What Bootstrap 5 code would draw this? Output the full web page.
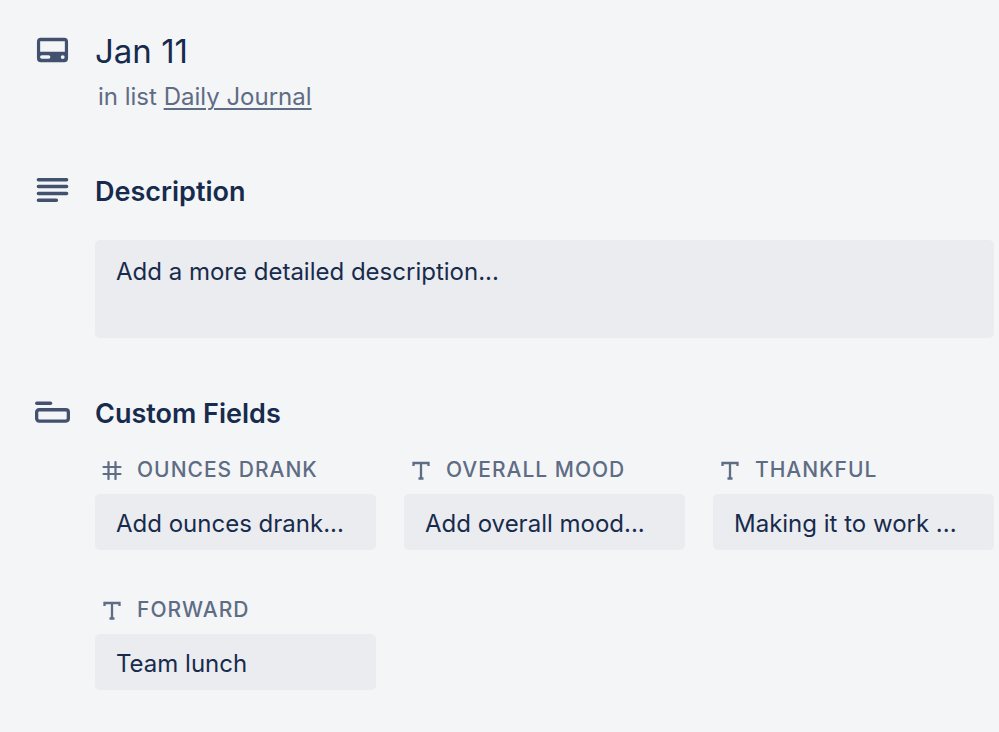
<!DOCTYPE html>
<html lang="en">
<head>
<meta charset="utf-8">
<meta name="viewport" content="width=device-width, initial-scale=1">
<title>Jan 11</title>
<link href="https://cdn.jsdelivr.net/npm/bootstrap@5.3.0/dist/css/bootstrap.min.css" rel="stylesheet">
<style>
  body { background: #f4f5f7; color: #172b4d; font-family: Inter, "Liberation Sans", sans-serif; font-size: 24px; line-height: 32px; }
  .card-detail { padding: 28px 5px 40px 35px; }
  .detail-section { display: grid; grid-template-columns: 35px minmax(0, 1fr); column-gap: 25px; }
  .section-icon { color: #42526e; height: 44px; }
  .detail-title { font-size: 33px; line-height: 46px; font-weight: 400; }
  .section-title { font-size: 27px; line-height: 48px; font-weight: 600; }
  .list-note { color: #5e6c84; padding-left: 3px; line-height: 46px; }
  .list-note a { color: inherit; text-decoration-thickness: 2px; text-underline-offset: 3px; }
  .field-box, .field-box:focus { background: #ebecf0; color: #172b4d; border: 0; border-radius: 5px; font-size: 24px; line-height: 32px; padding: 14px 21px 10px; }
  .field-box::placeholder { color: #172b4d; opacity: 1; }
  .description-box, .description-box:focus { padding-top: 16px; height: 98px; resize: none; }
  .after-title { margin-top: 48px; }
  .after-description { margin-top: 52px; }
  .fields { --bs-gutter-x: 28px; row-gap: 44px; }
  .field-label { color: #5e6c84; font-size: 21px; line-height: 32px; font-weight: 500; letter-spacing: 1px; gap: 15px; padding-left: 7px; margin-bottom: 8px; text-transform: uppercase; }
</style>
<script src="https://cdn.jsdelivr.net/npm/bootstrap@5.3.0/dist/js/bootstrap.bundle.min.js" defer></script>
</head>
<body>
<svg class="d-none" aria-hidden="true">
  <symbol id="type-text" viewBox="0 0 20 20">
    <path d="M2.500 6V3H17.500V6M10 3V19M7.500 18.500H12.500" fill="none" stroke="currentColor" stroke-width="2.300"/>
  </symbol>
  <symbol id="type-number" viewBox="0 0 20 20">
    <path d="M6.500 2V19M13.500 2V19M1.500 7H18.500M1.500 14H18.500" fill="none" stroke="currentColor" stroke-width="2.200" stroke-linecap="round"/>
  </symbol>
</svg>
<main class="card-detail">
  <header class="detail-section">
    <div class="section-icon d-flex align-items-center justify-content-center">
      <svg width="35" height="28" viewBox="0 0 36 28" aria-hidden="true"><path fill="currentColor" fill-rule="evenodd" d="M6 1.500H30A4 4 0 0 1 34 5.500V22.500A4 4 0 0 1 30 26.500H6A4 4 0 0 1 2 22.500V5.500A4 4 0 0 1 6 1.500ZM5.300 5V15.800H30.700V5ZM7 19.500A1.800 1.800 0 0 0 7 23.100H14A1.800 1.800 0 0 0 14 19.500ZM28.500 19.300A2 2 0 1 0 28.500 23.300A2 2 0 1 0 28.500 19.300Z"/></svg>
    </div>
    <div>
      <h1 class="detail-title m-0">Jan 11</h1>
      <p class="list-note m-0">in list <a href="#">Daily Journal</a></p>
    </div>
  </header>

  <section class="detail-section after-title">
    <div class="section-icon d-flex align-items-center justify-content-center">
      <svg width="35" height="28" viewBox="0 0 36 28" aria-hidden="true"><path d="M3.500 3.500H32.500M3.500 10.500H32.500M3.500 17.500H32.500M3.500 24.500H22" stroke="currentColor" stroke-width="3.600" stroke-linecap="round"/></svg>
    </div>
    <div>
      <h2 class="section-title mb-4"><label for="description">Description</label></h2>
      <textarea class="form-control field-box description-box" id="description" placeholder="Add a more detailed description..."></textarea>
    </div>
  </section>

  <section class="detail-section after-description">
    <div class="section-icon d-flex align-items-center justify-content-center">
      <svg width="35" height="24" viewBox="0 0 36 24" aria-hidden="true"><path d="M1.800 3H16" stroke="currentColor" stroke-width="3.400" stroke-linecap="round"/><rect x="1.700" y="9.700" width="32.600" height="11.600" rx="2.500" fill="none" stroke="currentColor" stroke-width="3.400"/></svg>
    </div>
    <div>
      <h2 class="section-title mb-3">Custom Fields</h2>
      <div class="row row-cols-3 fields">
        <div class="col">
          <label class="field-label d-flex align-items-center" for="ounces"><svg width="20" height="20" aria-hidden="true"><use href="#type-number"/></svg>Ounces drank</label>
          <input class="form-control field-box" id="ounces" type="text" placeholder="Add ounces drank...">
        </div>
        <div class="col">
          <label class="field-label d-flex align-items-center" for="mood"><svg width="20" height="20" aria-hidden="true"><use href="#type-text"/></svg>Overall mood</label>
          <input class="form-control field-box" id="mood" type="text" placeholder="Add overall mood...">
        </div>
        <div class="col">
          <label class="field-label d-flex align-items-center" for="thankful"><svg width="20" height="20" aria-hidden="true"><use href="#type-text"/></svg>Thankful</label>
          <input class="form-control field-box" id="thankful" type="text" value="Making it to work ...">
        </div>
        <div class="col">
          <label class="field-label d-flex align-items-center" for="forward"><svg width="20" height="20" aria-hidden="true"><use href="#type-text"/></svg>Forward</label>
          <input class="form-control field-box" id="forward" type="text" value="Team lunch">
        </div>
      </div>
    </div>
  </section>
</main>
</body>
</html>
